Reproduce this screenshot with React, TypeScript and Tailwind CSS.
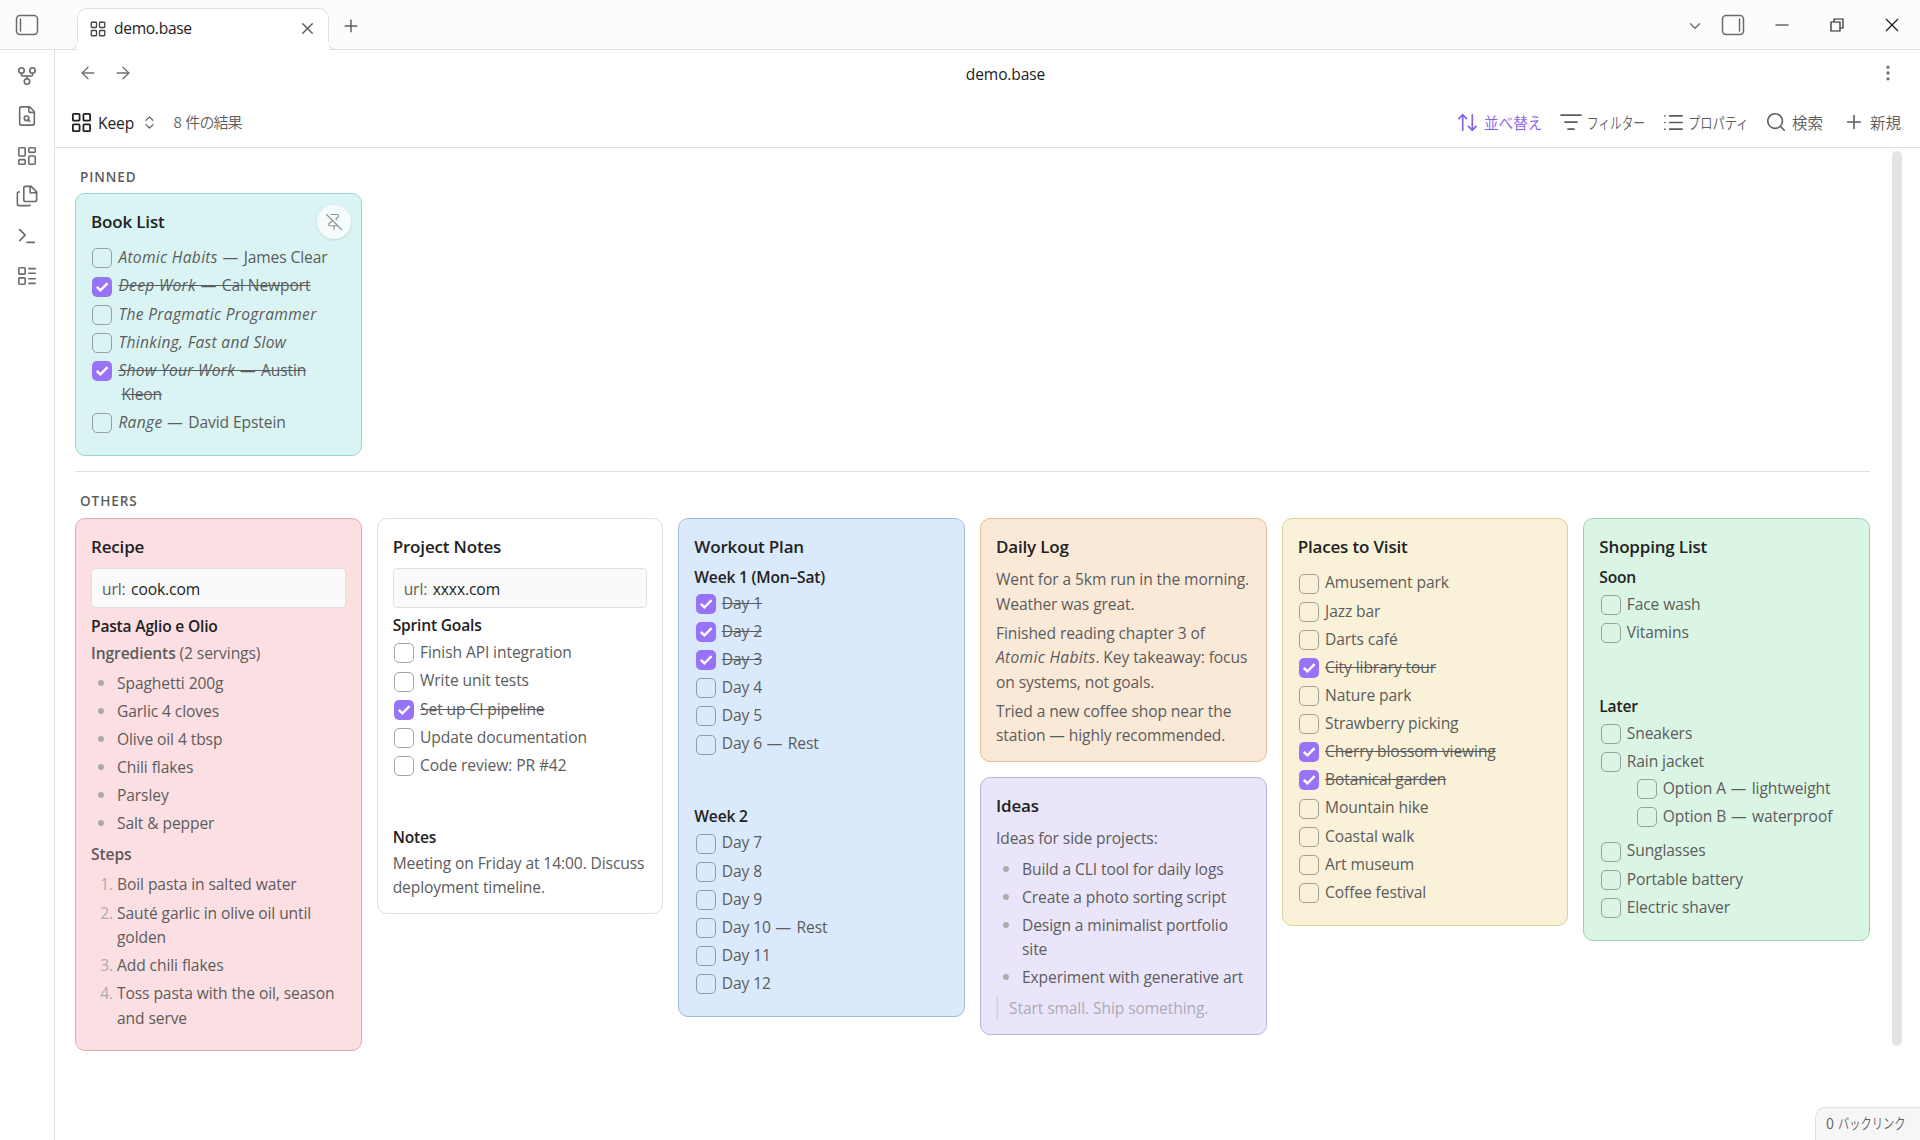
import { Fragment, type ReactNode } from "react";
import clsx from "clsx";
import {
	ArrowLeft,
	ArrowRight,
	ArrowUpDown,
	ChevronDown,
	ChevronsUpDown,
	EllipsisVertical,
	FileSearch,
	GitFork,
	LayoutDashboard,
	LayoutGrid,
	LayoutList,
	List,
	ListFilter,
	PinOff,
	Plus,
	Search,
	Terminal,
	X,
} from "lucide-react";

type Task = {
	text: ReactNode;
	done?: boolean;
	children?: Task[];
};

const FilesIcon = () => (
	<svg
		viewBox="0 0 24 24"
		className="size-[22px]"
		fill="none"
		stroke="currentColor"
		strokeWidth={1.75}
		strokeLinecap="round"
		strokeLinejoin="round"
	>
		<path d="M16.500 1.500h-6c-1.100 0-2 .9-2 2v12.500c0 1.100.9 2 2 2h10c1.100 0 2-.9 2-2V7.500z" />
		<path d="M15.500 1.500V8.500H22.500" />
		<path d="M3.500 7.500c-1.100 0-2 .9-2 2v11c0 1.100.9 2 2 2h10.500c.6 0 1.100-.3 1.500-.7" />
	</svg>
);

const PanelIcon = ({ side }: { side: "left" | "right" }) => (
	<svg
		viewBox="0 0 24 22"
		className="h-[22px] w-6"
		fill="none"
		stroke="currentColor"
		strokeWidth={1.5}
		strokeLinecap="round"
	>
		<rect x="1.5" y="1.5" width="21" height="19" rx="3.5" />
		{side === "left" ? <path d="M5.5 5v12" /> : <path d="M18.5 5v12" />}
	</svg>
);

const Checkbox = ({ done }: { done?: boolean }) => (
	<span
		className={clsx(
			"mt-[2.5px] flex size-5 shrink-0 items-center justify-center rounded-[5px]",
			done ? "bg-[#9873f7]" : "border border-[#5c5c5c]/55",
		)}
	>
		{done && (
			<svg viewBox="0 0 20 20" className="size-5" fill="none" stroke="#fff" strokeWidth={2.4}>
				<path d="M4.8 9.8 8.4 13.4 15.6 6.2" />
			</svg>
		)}
	</span>
);

const Title = ({ children }: { children: ReactNode }) => (
	<em className="tracking-[0.3px]">{children}</em>
);

const Dash = () => <span className="tracking-[0.7px]"> — </span>;

const TaskList = ({ tasks, nested }: { tasks: Task[]; nested?: boolean }) => (
	<ul className={clsx(nested && "-mt-px mb-[6px] pl-9")}>
		{tasks.map((task, index) => (
			<Fragment key={index}>
				<li className="flex gap-[6px] py-[1.875px] pl-[1.4px]">
					<Checkbox done={task.done} />
					<span
						className={clsx(
							"-mt-[0.6px] mb-[0.6px] min-w-0 flex-1 pl-[3px] -indent-[3px]",
							task.done && "line-through decoration-1",
						)}
					>
						{task.text}
					</span>
				</li>
				{task.children && <TaskList tasks={task.children} nested />}
			</Fragment>
		))}
	</ul>
);

const Bullets = ({ items }: { items: string[] }) => (
	<ul>
		{items.map((item) => (
			<li key={item} className="flex py-[1.875px]">
				<span className="ml-[7px] mr-[13px] mt-[9px] size-[6px] shrink-0 rounded-full bg-[#ababab]" />
				<span>{item}</span>
			</li>
		))}
	</ul>
);

const Steps = ({ items }: { items: string[] }) => (
	<ol>
		{items.map((item, index) => (
			<li key={item} className="flex py-[1.875px]">
				<span className="w-[26px] shrink-0 pr-[4px] text-right text-[#ababab]">{index + 1}.</span>
				<span>{item}</span>
			</li>
		))}
	</ol>
);

const Heading = ({ children, className }: { children: ReactNode; className?: string }) => (
	<h3 className={clsx("font-semibold tracking-[-0.2px] text-[#222]", className)}>{children}</h3>
);

const UrlField = ({ value }: { value: string }) => (
	<div className="mt-2 flex h-10 items-center gap-[5.5px] rounded-[5px] border border-[#e0e0e0] bg-[#fafafa] px-[10px] pt-[3px]">
		<span>url:</span>
		<span className="text-[#222]">{value}</span>
	</div>
);

const Card = ({
	title,
	tone,
	children,
}: {
	title: string;
	tone: string;
	children: ReactNode;
}) => (
	<article className={clsx("relative rounded-[10px] border px-[15px] pt-[15px]", tone)}>
		<h2 className="h-[26px] text-[17px] font-semibold leading-[26px] tracking-[-0.01em] text-[#222]">
			{title}
		</h2>
		{children}
	</article>
);

const RIBBON = [
	<GitFork key="graph" className="size-[22px]" strokeWidth={1.75} />,
	<FileSearch key="search" className="size-[22px]" strokeWidth={1.75} />,
	<LayoutDashboard key="canvas" className="size-[22px]" strokeWidth={1.75} />,
	<FilesIcon key="files" />,
	<Terminal key="terminal" className="size-[22px]" strokeWidth={1.75} />,
	<LayoutList key="base" className="size-[22px]" strokeWidth={1.75} />,
];

const BOOKS: Task[] = [
	{ text: <><Title>Atomic Habits</Title><Dash />James Clear</> },
	{ text: <><Title>Deep Work</Title><Dash />Cal Newport</>, done: true },
	{ text: <Title>The Pragmatic Programmer</Title> },
	{ text: <Title>Thinking, Fast and Slow</Title> },
	{ text: <><Title>Show Your Work</Title><Dash />Austin<br />Kleon</>, done: true },
	{ text: <><Title>Range</Title><Dash />David Epstein</> },
];

const PLACES: Task[] = [
	{ text: "Amusement park" },
	{ text: "Jazz bar" },
	{ text: "Darts café" },
	{ text: "City library tour", done: true },
	{ text: "Nature park" },
	{ text: "Strawberry picking" },
	{ text: "Cherry blossom viewing", done: true },
	{ text: "Botanical garden", done: true },
	{ text: "Mountain hike" },
	{ text: "Coastal walk" },
	{ text: "Art museum" },
	{ text: "Coffee festival" },
];

const TitleBar = () => (
	<header className="flex h-[50px] shrink-0 bg-[#fcfcfc] text-[#6b6b6b]">
		<div className="flex w-[77px] items-center border-b border-[#e0e0e0] pl-[15px] pt-px">
			<PanelIcon side="left" />
		</div>
		<div className="relative mt-2 flex w-[252px] items-center rounded-t-[10px] border border-b-0 border-[#e0e0e0] bg-white pb-[2px] pl-3 pr-[11px] text-[#222]">
			<span className="absolute -left-2 bottom-0 size-2 rounded-br-lg border-b border-r border-[#e0e0e0] bg-[#fcfcfc]" />
			<span className="absolute -left-px bottom-0 h-2 w-px bg-white" />
			<span className="absolute -right-2 bottom-0 size-2 rounded-bl-lg border-b border-l border-[#e0e0e0] bg-[#fcfcfc]" />
			<span className="absolute -right-px bottom-0 h-2 w-px bg-white" />
			<LayoutGrid className="-ml-px size-[18px] text-[#444]" strokeWidth={1.75} />
			<span className="ml-[7px] flex-1 tracking-[-0.02em]">demo.base</span>
			<X className="size-[19px] text-[#5c5c5c]" strokeWidth={1.75} />
		</div>
		<div className="flex flex-1 items-center border-b border-[#e0e0e0] pl-3">
			<Plus className="mt-[3px] size-5 text-[#5c5c5c]" strokeWidth={1.75} />
			<ChevronDown className="ml-auto mt-[2px] size-[18px]" strokeWidth={1.75} />
			<span className="ml-[17px] mt-px">
				<PanelIcon side="right" />
			</span>
			<svg viewBox="0 0 14 14" className="ml-[30px] size-[14px]" stroke="#444" strokeWidth={1.2}>
				<path d="M.5 7h13" />
			</svg>
			<svg viewBox="0 0 14 14" className="ml-[41px] size-[14px]" stroke="#222" strokeWidth={1.2} fill="none">
				<path d="M1 4h9v9H1zM4 4V1h9v9h-3" />
			</svg>
			<svg viewBox="0 0 14 14" className="ml-[41px] mr-[21px] size-[14px]" stroke="#222" strokeWidth={1.3}>
				<path d="m1 1 12 12M13 1 1 13" />
			</svg>
		</div>
	</header>
);

const Toolbar = () => (
	<div className="flex h-[50px] items-center pl-[15px] pr-[18px] text-[#5c5c5c]">
		<LayoutGrid className="size-[23px] text-[#222]" strokeWidth={1.9} />
		<span className="ml-[5px] w-[36px] whitespace-nowrap pt-[2px] text-[#222]">Keep</span>
		<ChevronsUpDown className="ml-[7px] size-[17px]" strokeWidth={1.75} />
		<span className="ml-[15.5px] font-['Noto_Sans_CJK_JP',sans-serif] text-[15px] font-[350] tracking-[-0.06em] [word-spacing:2px]">
			8 件の結果
		</span>
		<div className="ml-auto flex items-center whitespace-nowrap font-['Noto_Sans_CJK_JP',sans-serif] text-[15.5px] font-[350] tracking-normal">
			<ArrowUpDown className="size-[23px] text-[#8560e8]" strokeWidth={1.75} />
			<span className="ml-[5px] w-[75px] text-[#8560e8]">
				<span className="inline-block origin-left scale-x-[0.94]">並べ替え</span>
			</span>
			<ListFilter className="size-6" strokeWidth={1.75} />
			<span className="ml-[4px] w-[75px]">
				<span className="inline-block origin-left scale-x-[0.75]">フィルター</span>
			</span>
			<List className="size-[23px]" strokeWidth={1.75} />
			<span className="ml-[3px] w-[77px]">
				<span className="inline-block origin-left scale-x-[0.79]">プロパティ</span>
			</span>
			<Search className="size-[22px]" strokeWidth={1.75} />
			<span className="ml-[5px] w-[51px]">検索</span>
			<Plus className="size-[22px]" strokeWidth={1.75} />
			<span className="ml-[5px] w-8">新規</span>
		</div>
	</div>
);

const App = () => (
	<div className="relative flex h-[1140px] w-[1920px] flex-col overflow-hidden bg-white font-['Open_Sans','Noto_Sans_CJK_JP',sans-serif] text-[15.6px] leading-[24.375px] tracking-[-0.1px] text-[#5c5c5c]">
		<TitleBar />
		<div className="flex min-h-0 flex-1">
			<nav className="flex w-[55px] shrink-0 flex-col items-center gap-[18px] border-r border-[#e0e0e0] pt-[15px] text-[#6b6b6b]">
				{RIBBON}
			</nav>
			<main className="flex min-w-0 flex-1 flex-col">
				<div className="flex h-[47px] items-center pb-px pl-[23px] pr-[22px] text-[#707070]">
					<ArrowLeft className="size-5" strokeWidth={1.6} />
					<ArrowRight className="ml-[15px] size-5" strokeWidth={1.6} />
					<span className="flex-1 pt-[2px] text-center tracking-[-0.15px] text-[#222]">demo.base</span>
					<EllipsisVertical className="size-5" strokeWidth={2} />
				</div>
				<Toolbar />
				<div className="flex min-h-0 flex-1 border-t border-[#e0e0e0] pl-5">
					<div className="w-[1795px]">
						<h4 className="mt-[17px] h-[28px] pl-[5px] text-[13.5px] font-semibold tracking-[0.07em]">
							PINNED
						</h4>
						<section className="grid grid-cols-6 gap-[15px]">
							<Card title="Book List" tone="border-[#9dd3d0] bg-[#d9f4f3] pb-[18px]">
								<span className="absolute right-[10px] top-[11px] flex size-[34px] items-center justify-center rounded-full bg-white/75 shadow-sm">
									<PinOff className="size-[18px] text-[#8d9796]" strokeWidth={1.6} />
								</span>
								<div className="mt-[9px]">
									<TaskList tasks={BOOKS} />
								</div>
							</Card>
						</section>
						<hr className="mt-[15px] border-[#e0e0e0]" />
						<h4 className="mt-[17px] h-[29px] pl-[5px] text-[13.5px] font-semibold tracking-[0.07em]">
							OTHERS
						</h4>
						<section className="grid grid-cols-6 items-start gap-[15px]">
							<Card title="Recipe" tone="border-[#dfabb3] bg-[#fcdfe2] pb-[18.5px]">
								<UrlField value="cook.com" />
								<Heading className="mt-[6px]">Pasta Aglio e Olio</Heading>
								<p className="mb-[4px] mt-[2px]">
									<strong className="font-semibold">Ingredients</strong> (2 servings)
								</p>
								<Bullets
									items={[
										"Spaghetti 200g",
										"Garlic 4 cloves",
										"Olive oil 4 tbsp",
										"Chili flakes",
										"Parsley",
										"Salt & pepper",
									]}
								/>
								<p className="mb-[4px] mt-[4.5px] font-semibold">Steps</p>
								<Steps
									items={[
										"Boil pasta in salted water",
										"Sauté garlic in olive oil until golden",
										"Add chili flakes",
										"Toss pasta with the oil, season and serve",
									]}
								/>
							</Card>

							<Card title="Project Notes" tone="border-[#e0e0e0] bg-white pb-[14px]">
								<UrlField value="xxxx.com" />
								<Heading className="mb-[1.5px] mt-[5px]">Sprint Goals</Heading>
								<TaskList
									tasks={[
										{ text: "Finish API integration" },
										{ text: "Write unit tests" },
										{ text: "Set up CI pipeline", done: true },
										{ text: "Update documentation" },
										{ text: "Code review: PR #42" },
									]}
								/>
								<Heading className="mt-[45.5px]">Notes</Heading>
								<p className="mt-px">Meeting on Friday at 14:00. Discuss deployment timeline.</p>
							</Card>

							<Card title="Workout Plan" tone="border-[#9fbadb] bg-[#dae9fb] pb-[18.5px]">
								<Heading className="mb-[0.5px] mt-[4.5px]">Week 1 (Mon–Sat)</Heading>
								<TaskList
									tasks={[
										{ text: "Day 1", done: true },
										{ text: "Day 2", done: true },
										{ text: "Day 3", done: true },
										{ text: "Day 4" },
										{ text: "Day 5" },
										{ text: <>Day 6<Dash />Rest</> },
									]}
								/>
								<Heading className="mb-[0.5px] mt-[46px]">Week 2</Heading>
								<TaskList
									tasks={[
										{ text: "Day 7" },
										{ text: "Day 8" },
										{ text: "Day 9" },
										{ text: <>Day 10<Dash />Rest</> },
										{ text: "Day 11" },
										{ text: "Day 12" },
									]}
								/>
							</Card>

							<div className="flex flex-col gap-[15px]">
								<Card title="Daily Log" tone="border-[#dfc1a0] bg-[#fbe9d8] pb-[13px]">
									<div className="-mr-1 mt-[7px] space-y-[5px]">
										<p>
											Went for a 5km run in the morning.
											<br />
											Weather was great.
										</p>
										<p>
											Finished reading chapter 3 of
											<br />
											<Title>Atomic Habits</Title>. Key takeaway: focus
											<br />
											on systems, not goals.
										</p>
										<p>
											Tried a new coffee shop near the
											<br />
											station — highly recommended.
										</p>
									</div>
								</Card>
								<Card title="Ideas" tone="border-[#b9b2da] bg-[#ebe5fb] pb-[14.5px]">
									<p className="mb-[4px] mt-[7.5px]">Ideas for side projects:</p>
									<Bullets
										items={[
											"Build a CLI tool for daily logs",
											"Create a photo sorting script",
											"Design a minimalist portfolio site",
											"Experiment with generative art",
										]}
									/>
									<blockquote className="mt-[4px] border-l-[3px] border-[#dcdae2] pl-[10px] text-[#ababb3]">
										Start small. Ship something.
									</blockquote>
								</Card>
							</div>

							<Card title="Places to Visit" tone="border-[#dfd096] bg-[#faf1d9] pb-[18px]">
								<div className="mt-[9px]">
									<TaskList tasks={PLACES} />
								</div>
							</Card>

							<Card title="Shopping List" tone="border-[#9dcfb3] bg-[#dbf5e4] pb-[18.5px]">
								<Heading className="mb-px mt-[5px]">Soon</Heading>
								<TaskList tasks={[{ text: "Face wash" }, { text: "Vitamins" }]} />
								<Heading className="mb-px mt-[47.5px]">Later</Heading>
								<TaskList
									tasks={[
										{ text: "Sneakers" },
										{
											text: "Rain jacket",
											children: [
												{ text: <>Option A<Dash />lightweight</> },
												{ text: <>Option B<Dash />waterproof</> },
											],
										},
										{ text: "Sunglasses" },
										{ text: "Portable battery" },
										{ text: "Electric shaver" },
									]}
								/>
							</Card>
						</section>
					</div>
					<div className="ml-[22px] mt-[3px] h-[895px] w-[10px] rounded-full bg-[#e4e4e4]" />
				</div>
			</main>
		</div>
		<footer className="absolute bottom-0 right-0 flex h-[33px] w-[105px] items-center whitespace-nowrap rounded-tl-[10px] border-l border-t border-[#e0e0e0] bg-[#f6f6f6] pb-[2px] pl-[10px] font-['Noto_Sans_CJK_JP',sans-serif] text-[14.5px] font-[350]">
			<span>0</span>
			<span className="ml-1 inline-block origin-left scale-x-[0.78]">バックリンク</span>
		</footer>
	</div>
);

export default App;
